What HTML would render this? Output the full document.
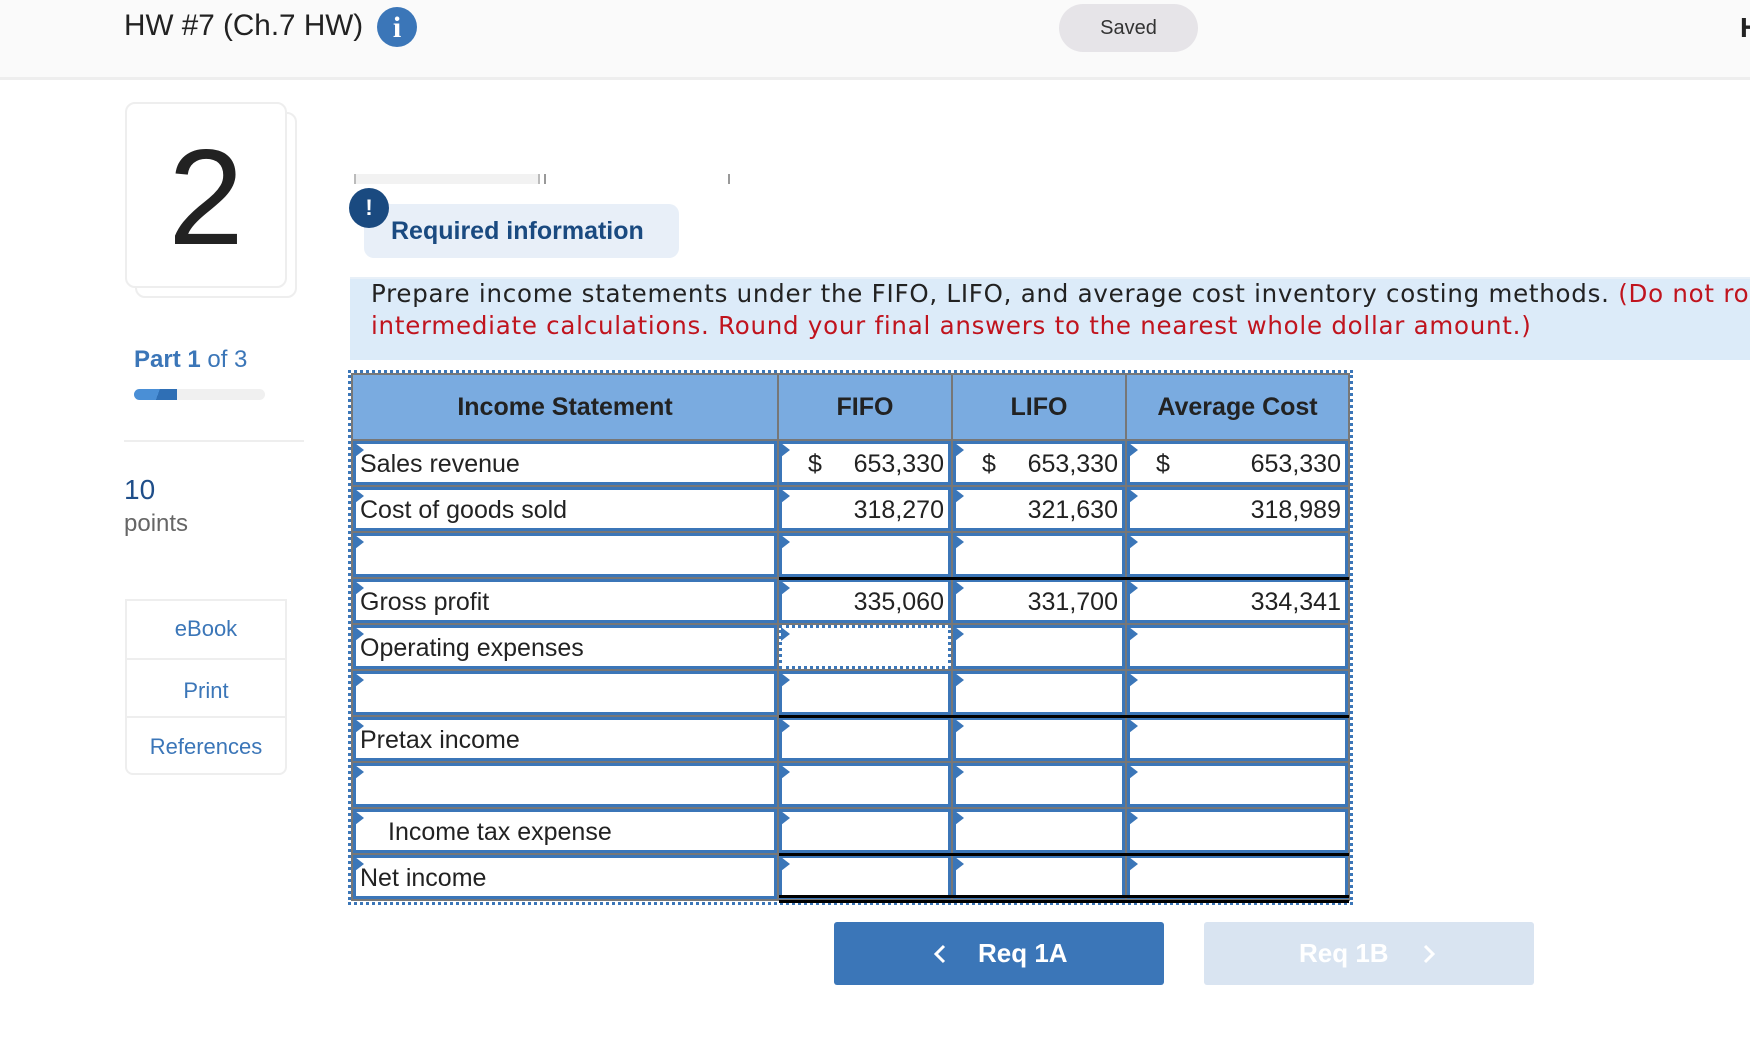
<!DOCTYPE html>
<html><head><meta charset="utf-8"><style>
*{margin:0;padding:0;box-sizing:border-box}
body{width:1750px;height:1050px;background:#fff;position:relative;overflow:hidden;font-family:"Liberation Sans",Arial,sans-serif;color:#222}
.a{position:absolute}
.hdr{left:0;top:0;width:1750px;height:80px;background:#fafafa;border-bottom:3px solid #eee}
.grid{left:351px;top:373px;width:999px;background:#777;padding:2px;display:grid;grid-template-columns:424px 172px 172px 221px;grid-template-rows:64px repeat(10,44px);gap:2px}
.h{background:#7aabe0;font-weight:bold;font-size:25px;display:flex;align-items:center;justify-content:center;color:#222}
.c{background:#fff;border:3px solid #3b76b8;position:relative;font-size:25px;display:flex;align-items:center;padding:2px 4px 0;white-space:nowrap}
.c::before{content:"";position:absolute;left:-1px;top:-1px;border-left:9px solid #3b76b8;border-top:7px solid transparent;border-bottom:7px solid transparent}
.v{justify-content:flex-end}
.d{margin-right:auto;padding-left:22px}
.bl{position:absolute;height:3px;background:#000;left:779px;width:570px}
</style></head><body>
<div class="a hdr"></div>
<div class="a" style="left:124px;top:9px;font-size:29.7px;color:#222">HW #7 (Ch.7 HW)</div>
<div class="a" style="left:377px;top:7px;width:40px;height:40px;border-radius:50%;background:#3b76b8;color:#fff;font:bold 30px 'Liberation Serif',serif;text-align:center;line-height:42px">i</div>
<div class="a" style="left:1059px;top:4px;width:139px;height:48px;border-radius:24px;background:#e6e4e8;font-size:20px;color:#333;text-align:center;line-height:48px">Saved</div>
<div class="a" style="left:1740px;top:12px;font-size:28px;font-weight:bold;color:#222">H</div>

<div class="a" style="left:135px;top:112px;width:162px;height:186px;border:2px solid #eee;border-radius:10px;background:#fff"></div>
<div class="a" style="left:125px;top:102px;width:162px;height:186px;border:2px solid #eee;border-radius:10px;background:#fff;text-align:center;font-size:136px;line-height:186px;color:#222">2</div>

<div class="a" style="left:134px;top:346px;font-size:24px;color:#3b76b8"><b>Part 1</b> of 3</div>
<div class="a" style="left:134px;top:389px;width:131px;height:11px;border-radius:6px;background:#f0f0f0;overflow:hidden"><div style="width:43px;height:11px;background:linear-gradient(110deg,#4a8fd6 55%,#2f6fb5 55%)"></div></div>
<div class="a" style="left:124px;top:440px;width:180px;height:2px;background:#eee"></div>
<div class="a" style="left:124px;top:474px;font-size:28px;color:#1f4e89">10</div>
<div class="a" style="left:124px;top:510px;font-size:24px;color:#666">points</div>
<div class="a" style="left:125px;top:599px;width:162px;height:176px;border:2px solid #eee;border-radius:0 0 8px 8px;background:#fff"></div>
<div class="a" style="left:125px;top:658px;width:162px;height:2px;background:#eee"></div>
<div class="a" style="left:125px;top:716px;width:162px;height:2px;background:#eee"></div>
<div class="a" style="left:125px;top:616px;width:162px;text-align:center;font-size:22px;color:#3b76b8">eBook</div>
<div class="a" style="left:125px;top:678px;width:162px;text-align:center;font-size:22px;color:#3b76b8">Print</div>
<div class="a" style="left:125px;top:734px;width:162px;text-align:center;font-size:22px;color:#3b76b8">References</div>

<div class="a" style="left:354px;top:174px;width:186px;height:10px;background:#f2f2f2;border-left:2px solid #bbb;border-right:2px solid #bbb"></div>
<div class="a" style="left:544px;top:174px;width:2px;height:10px;background:#999"></div>
<div class="a" style="left:728px;top:174px;width:2px;height:10px;background:#999"></div>
<div class="a" style="left:364px;top:204px;width:315px;height:54px;border-radius:10px;background:#e8eff8"></div>
<div class="a" style="left:349px;top:188px;width:40px;height:40px;border-radius:50%;background:#1a4a80;color:#fff;font:bold 22px 'Liberation Sans',sans-serif;text-align:center;line-height:40px">!</div>
<div class="a" style="left:391px;top:217px;font-size:25px;font-weight:bold;color:#1a4a80">Required information</div>

<div class="a" style="left:350px;top:277px;width:1400px;height:83px;background:#dcebf9;border-top:2px solid #e8f0f8"></div>
<div class="a" style="left:371px;top:278px;width:1400px;font-family:'DejaVu Sans',Verdana,sans-serif;font-size:24.5px;letter-spacing:0.75px;line-height:32px;white-space:nowrap;color:#222">Prepare income statements under the FIFO, LIFO, and average cost inventory costing methods. <span style="color:#c0141e">(Do not round</span><br><span style="color:#c0141e">intermediate calculations. Round your final answers to the nearest whole dollar amount.)</span></div>

<div class="a" style="left:348px;top:370px;width:1005px;height:535px;border:3px dotted #3b76b8"></div>
<div class="a grid">
<div class="h">Income Statement</div><div class="h">FIFO</div><div class="h">LIFO</div><div class="h">Average Cost</div>
<div class="c">Sales revenue</div><div class="c v"><span class="d">$</span>653,330</div><div class="c v"><span class="d">$</span>653,330</div><div class="c v"><span class="d">$</span>653,330</div>
<div class="c">Cost of goods sold</div><div class="c v">318,270</div><div class="c v">321,630</div><div class="c v">318,989</div>
<div class="c"></div><div class="c"></div><div class="c"></div><div class="c"></div>
<div class="c">Gross profit</div><div class="c v">335,060</div><div class="c v">331,700</div><div class="c v">334,341</div>
<div class="c">Operating expenses</div><div class="c" style="border:3px dotted #3b76b8"></div><div class="c"></div><div class="c"></div>
<div class="c"></div><div class="c"></div><div class="c"></div><div class="c"></div>
<div class="c">Pretax income</div><div class="c"></div><div class="c"></div><div class="c"></div>
<div class="c"></div><div class="c"></div><div class="c"></div><div class="c"></div>
<div class="c" style="padding-left:32px">Income tax expense</div><div class="c"></div><div class="c"></div><div class="c"></div>
<div class="c">Net income</div><div class="c"></div><div class="c"></div><div class="c"></div>
</div>
<div class="bl" style="top:577px"></div>
<div class="bl" style="top:715px"></div>
<div class="bl" style="top:853px"></div>
<div class="bl" style="top:895px"></div>
<div class="bl" style="top:900px"></div>

<div class="a" style="left:834px;top:922px;width:330px;height:63px;border-radius:3px;background:#3b76b8;color:#fff;font-size:26px;font-weight:bold;line-height:63px">
<svg class="a" style="left:99px;top:22px" width="14" height="20" viewBox="0 0 14 20"><path d="M11 2 L3 10 L11 18" stroke="#fff" stroke-width="3" fill="none"/></svg>
<span class="a" style="left:144px;top:0">Req 1A</span></div>
<div class="a" style="left:1204px;top:922px;width:330px;height:63px;border-radius:3px;background:#d9e4f1;color:#fff;font-size:26px;font-weight:bold;line-height:63px">
<span class="a" style="left:95px;top:0">Req 1B</span>
<svg class="a" style="left:218px;top:22px" width="14" height="20" viewBox="0 0 14 20"><path d="M3 2 L11 10 L3 18" stroke="#fff" stroke-width="3" fill="none"/></svg></div>
</body></html>
